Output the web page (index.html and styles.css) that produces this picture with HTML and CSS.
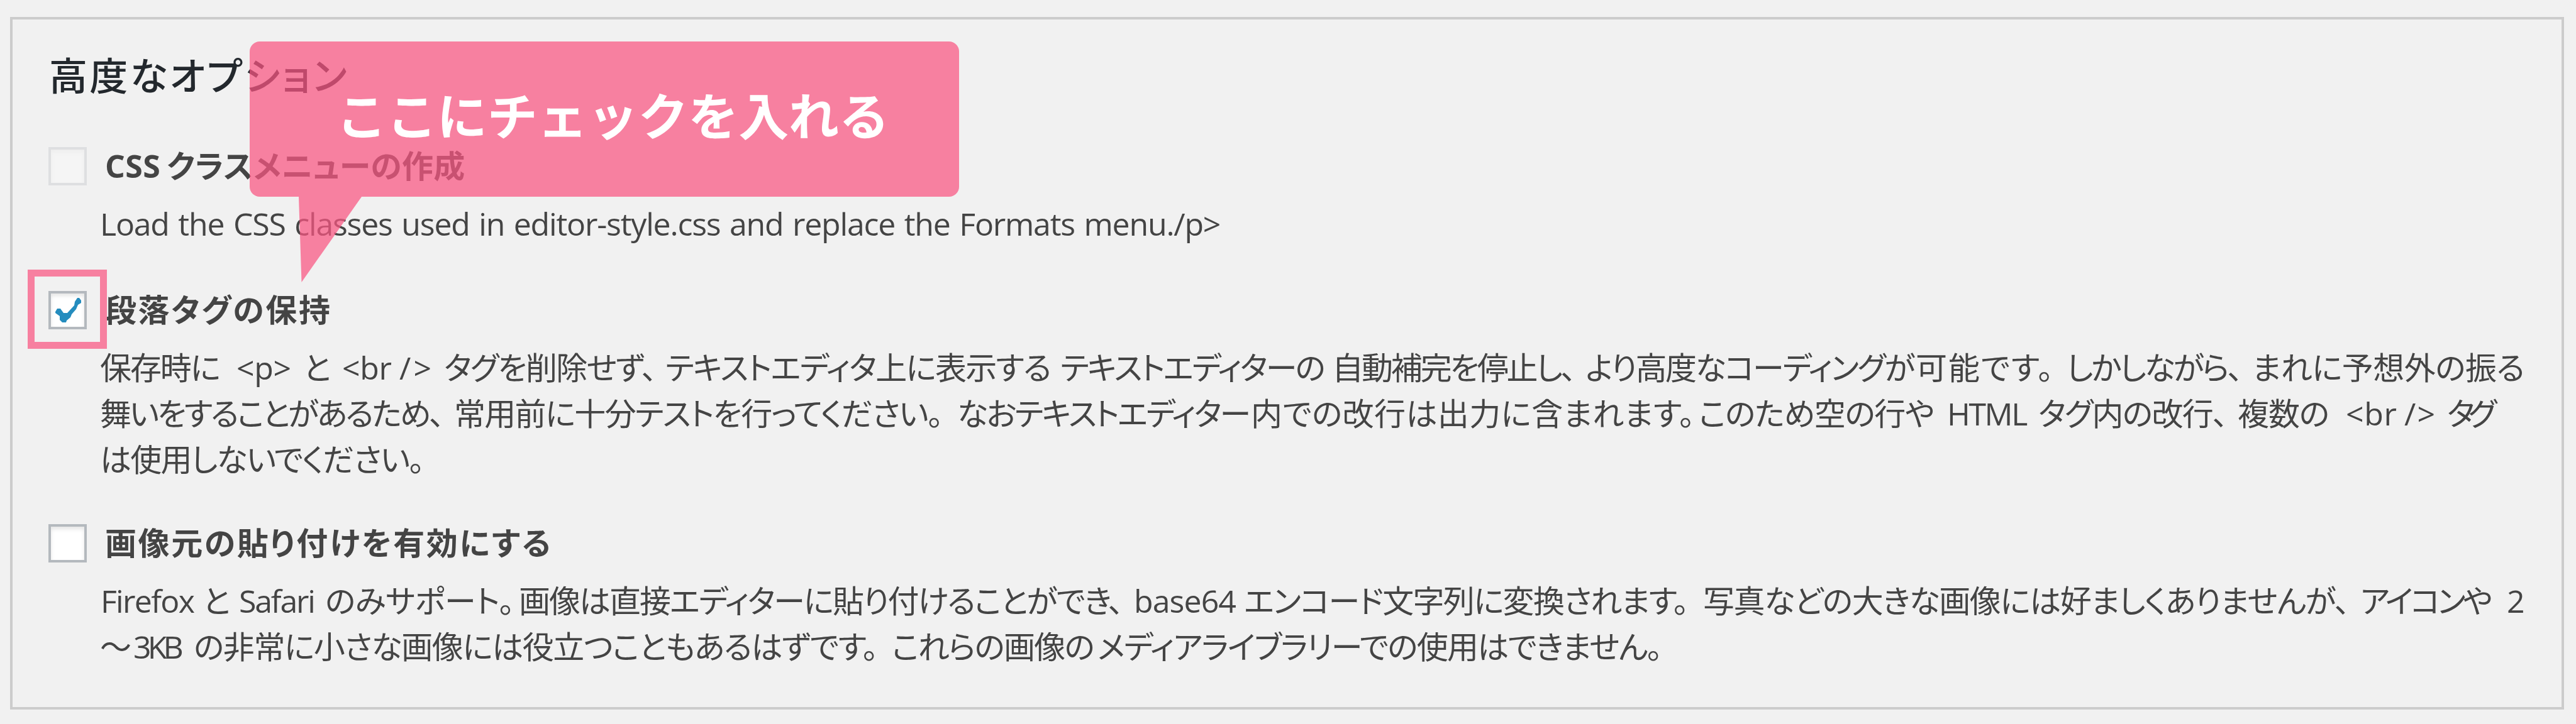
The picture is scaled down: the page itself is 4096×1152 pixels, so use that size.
FILE: index.html
```html
<!DOCTYPE html>
<html lang="ja">
<head>
    <meta charset="UTF-8">
    <title>高度なオプション</title>
    <link rel="stylesheet" href="styles.css">
</head>
<body>
    <fieldset class="panel">
        <h2 class="title">高度なオプション</h2>

        <div class="option">
            <span class="checkbox disabled"></span>
            <label class="label-css"><span>CSS</span><span>クラスメニューの作成</span></label>
        </div>
        <p class="text text-css">Load the CSS classes used in editor-style.css and replace the Formats menu./p&gt;</p>

        <div class="option">
            <span class="checkbox"><svg viewBox="0 0 53 53"><path d="M7 29 L10 24 L15 24 L20 31 L26 31 L37 19 L38 13 L42 7 L45 7 L48 11 L48 15 L43 18 L40 25 L33 33 L31 38 L25 43 L24 46 L18 46 L14 42 L14 36 L7 31 Z"/></svg></span>
            <label>段落タグの保持</label>
        </div>
        <div class="text">
            <div class="line line-1">
                <span>保存時に</span>
                <span>&lt;p&gt;</span>
                <span>と</span>
                <span>&lt;br</span>
                <span>/&gt;</span>
                <span>タグを削除せず、</span>
                <span>テキストエディタ上に表示する</span>
                <span>テキストエディターの</span>
                <span>自動補完を停止し、</span>
                <span>より高度なコーディングが</span>
                <span>可能です。</span>
                <span>しかしながら、</span>
                <span>まれに予想外の振る</span>
            </div>
            <div class="line line-2">
                <span>舞いをすることがあるため、</span>
                <span>常用前に十分テストを行ってください。</span>
                <span>なおテキストエディター</span>
                <span>内での改行は出力に含まれます。</span>
                <span>このため空の行や</span>
                <span>HTML</span>
                <span>タグ内の改行、</span>
                <span>複数の</span>
                <span>&lt;br</span>
                <span>/&gt;</span>
                <span>タグ</span>
            </div>
            <div class="line line-3">
                <span>は使用しないでください。</span>
            </div>
        </div>

        <div class="option">
            <span class="checkbox"></span>
            <label>画像元の貼り付けを有効にする</label>
        </div>
        <div class="text">
            <div class="line line-4">
                <span>Firefox</span>
                <span>と</span>
                <span>Safari</span>
                <span>のみサポート。</span>
                <span>画像は直接エディターに貼り付けることができ、</span>
                <span>base64</span>
                <span>エンコード文字列に変換されます。</span>
                <span>写真などの大きな画像には好ましくありませんが、</span>
                <span>アイコンや</span>
                <span>2</span>
            </div>
            <div class="line line-5">
                <span>～</span>
                <span>3KB</span>
                <span>の非常に小さな画像には役立つこともあるはずです。</span>
                <span>これらの画像の</span>
                <span>メディアライブラリーでの使用はできません。</span>
            </div>
        </div>
    </fieldset>

    <div class="marker"></div>
    <div class="callout">
        ここにチェックを入れる
        <svg class="tail" viewBox="0 0 100 136"><path d="M0 0 H100 L4.5 136 Z"/></svg>
    </div>
</body>
</html>
```
FILE: styles.css
```css
body {
    margin: 0;
    padding: 27px 19px 0 16px;
    height: 1152px;
    box-sizing: border-box;
    background-color: #f1f1f1;
    font-family: "Open Sans", "Noto Sans CJK JP", sans-serif;
    font-size: 50px;
    line-height: 73px;
    color: #444;
    overflow: hidden;
}

.panel {
    margin: 0;
    padding: 48px 0 0 57px;
    height: 1102px;
    min-width: 0;
    box-sizing: border-box;
    border: 4px solid #ccc;
    font-feature-settings: "palt";
    white-space: nowrap;
}

.title {
    margin: 0 0 0 1px;
    font-size: 61px;
    line-height: 84px;
    font-weight: 500;
    letter-spacing: 3.3px;
    color: #23282d;
}

/* checkbox rows */
.option {
    display: flex;
    align-items: center;
    margin-top: 65px;
    font-weight: 700;
}

.option label {
    padding-left: 29px;
    letter-spacing: 2.6px;
}

.option .label-css {
    display: grid;
    grid-template-columns: 98px auto;
    letter-spacing: 0.4px;
}

.text + .option {
    margin-top: 64px;
}

.text ~ .text + .option {
    margin-top: 60px;
}

.checkbox {
    width: 61px;
    height: 61px;
    box-sizing: border-box;
    border: 4px solid #b4b9be;
    background-color: #fff;
    box-shadow: inset 0 4px 6px rgba(0, 0, 0, 0.1);
}

.checkbox svg {
    display: block;
    width: 53px;
    height: 53px;
    fill: #248cbe;
}

.disabled {
    opacity: 0.3;
}

/* descriptions */
.text {
    margin: 19px 0 0;
    padding-left: 82px;
}

.text-css {
    letter-spacing: -1.2px;
    word-spacing: 2.8px;
}

.line {
    display: grid;
    letter-spacing: -1.7px;
}

.line-1 {
    grid-template-columns: 217px 106px 62px 91px 71px 352px 628px 432px 403px 525px 240px 295px auto;
}

.line-1 :nth-child(1) { letter-spacing: -2.1px; }
.line-1 :nth-child(2) { letter-spacing: -0.4px; }
.line-1 :nth-child(4) { letter-spacing: -0.3px; }
.line-1 :nth-child(5) { letter-spacing: 4.1px; }
.line-1 :nth-child(8) { letter-spacing: -2.6px; }
.line-1 :nth-child(9) { letter-spacing: -3.1px; }
.line-1 :nth-child(10) { letter-spacing: -2.4px; }
.line-1 :nth-child(11) { letter-spacing: 1.9px; }
.line-1 :nth-child(12) { letter-spacing: -3.1px; }
.line-1 :nth-child(13) { letter-spacing: -0.5px; }

.line-2 {
    grid-template-columns: 563px 800px 467px 712px 395px 145px 317px 172px 93px 68px auto;
}

.line-2 :nth-child(1) { letter-spacing: -3.1px; }
.line-2 :nth-child(3) { letter-spacing: -2.7px; }
.line-2 :nth-child(4) { letter-spacing: 0.4px; }
.line-2 :nth-child(5) { letter-spacing: -1.3px; }
.line-2 :nth-child(6) { letter-spacing: -2.4px; }
.line-2 :nth-child(8) { letter-spacing: -1.1px; }
.line-2 :nth-child(9) { letter-spacing: 0.7px; }
.line-2 :nth-child(10) { letter-spacing: 2.1px; }
.line-2 :nth-child(11) { letter-spacing: -10px; }

.line-4 {
    grid-template-columns: 162px 58px 137px 308px 978px 175px 730px 1045px 233px auto;
    margin-left: 1px;
}

.line-4 :nth-child(3) { letter-spacing: -2.2px; }
.line-4 :nth-child(4) { letter-spacing: -0.5px; }
.line-4 :nth-child(5) { letter-spacing: -2px; }
.line-4 :nth-child(6) { letter-spacing: -0.9px; }
.line-4 :nth-child(8) { letter-spacing: -1.4px; }
.line-4 :nth-child(9) { letter-spacing: -4.2px; }

.line-5 {
    grid-template-columns: 53px 96px 1110px 327px auto;
}

.line-5 :nth-child(2) { letter-spacing: -5.8px; }
.line-5 :nth-child(3) { letter-spacing: -1.4px; }

/* annotations over the panel */
.marker {
    position: absolute;
    left: 44px;
    top: 429px;
    width: 126px;
    height: 126px;
    box-sizing: border-box;
    border: 11px solid #f780a0;
}

.callout {
    position: absolute;
    left: 397px;
    top: 66px;
    width: 1128px;
    height: 247px;
    padding-left: 138px;
    box-sizing: border-box;
    border-radius: 16px;
    background-color: rgba(249, 86, 130, 0.73);
    color: #fff;
    font-size: 80px;
    line-height: 235px;
    font-weight: 700;
    letter-spacing: -0.1px;
    white-space: nowrap;
}

.tail {
    position: absolute;
    left: 78px;
    top: 247px;
    width: 100px;
    height: 136px;
    fill: rgba(249, 86, 130, 0.73);
}
```
